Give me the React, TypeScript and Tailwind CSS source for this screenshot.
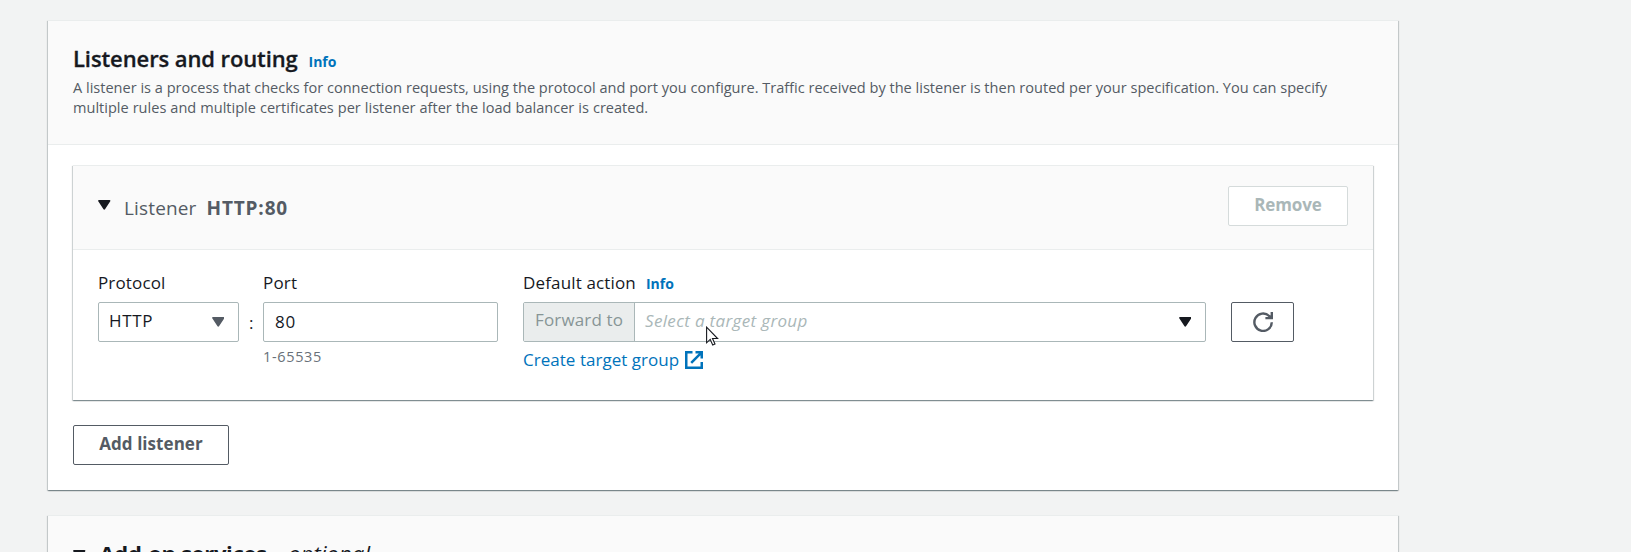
import type { ReactNode } from "react";

function Caret({ className = "" }: { className?: string }) {
  return (
    <svg width="12.5" height="10.5" viewBox="0 0 13 11" className={className} fill="currentColor">
      <path d="M1 0h11c.8 0 1.2.8.8 1.4L7.3 9.8c-.4.6-1.2.6-1.6 0L.2 1.4C-.2.8.2 0 1 0z" />
    </svg>
  );
}

function RefreshIcon() {
  return (
    <svg width="20" height="20" viewBox="0 0 20 20" fill="none" stroke="currentColor" strokeWidth="2.4">
      <path d="M18.8 10.2a8.7 8.7 0 1 1-2.6-6.2l2 2" />
      <path d="M18.8 0v6.1h-6.4" />
      <path d="M15.2 3.6h3.2v2h-2.6z" fill="currentColor" stroke="none" />
    </svg>
  );
}

function ExternalIcon() {
  return (
    <svg width="18" height="18" viewBox="0 0 18 18" fill="none" stroke="currentColor" strokeWidth="2.5">
      <path d="M7.5 1.25H1.25v15.5h15.5V11" />
      <path d="M10.5 1.25h6.25V7.5M16.4 1.6L6.2 11.8" />
    </svg>
  );
}

function Panel({ className = "", children }: { className?: string; children: ReactNode }) {
  return (
    <section
      className={`border-t border-[#eaeded] bg-white shadow-[0_1px_1px_0_rgba(0,28,36,0.3),1px_1px_1px_0_rgba(0,28,36,0.15),-1px_1px_1px_0_rgba(0,28,36,0.15)] ${className}`}
    >
      {children}
    </section>
  );
}

function Info({ className = "" }: { className?: string }) {
  return <a className={`text-[14px] font-bold text-[#0073bb] ${className}`}>Info</a>;
}

export default function App() {
  return (
    <div className="h-[552px] overflow-hidden bg-[#f2f3f3] pt-[20px] pl-[48px] font-['Open_Sans','Noto_Sans',sans-serif] text-[17px] leading-[22px] text-[#16191f]">
      <Panel className="h-[470px] w-[1350px]">
        <header className="h-[124px] border-b border-[#eaeded] bg-[#fafafa] px-[25px] pt-[22px]">
          <div className="flex h-[30px] items-baseline leading-[30px]">
            <h2 className="w-[224px] text-[22px] font-semibold tracking-[-0.1px] whitespace-nowrap [-webkit-text-stroke:0.3px_currentColor]">
              Listeners and routing
            </h2>
            <Info className="ml-[11.5px]" />
          </div>
          <p className="mt-[4px] text-[14.56px] leading-[20px] whitespace-nowrap text-[#545b64]">
            A listener is a process that checks for connection requests, using the protocol and port you configure. Traffic received by the listener is then routed per your specification. You can specify
            <br />
            <span className="[word-spacing:0.24px]">
              multiple rules and multiple certificates per listener after the load balancer is created.
            </span>
          </p>
        </header>

        <div className="px-[25px] pt-[20px]">
          <Panel className="h-[235px] w-[1300px]">
            <header className="flex h-[84px] items-start border-b border-[#eaeded] bg-[#fafafa] pr-[25px] pl-[25px]">
              <Caret className="mt-[34px]" />
              <h3 className="mt-[28px] ml-[13.5px] flex text-[19px] leading-[28px] text-[#545b64]">
                <span className="tracking-[0.15px]">Listener</span>
                <span className="ml-[10px] font-bold tracking-[0.85px]">HTTP:80</span>
              </h3>
              <button className="mt-[20px] ml-auto h-[40px] w-[120px] rounded-[2px] border border-[#d5dbdb] bg-white pb-[3px] font-bold tracking-[-0.1px] text-[#aab7b8]">
                Remove
              </button>
            </header>

            <div className="flex pt-[22px] pl-[25px]">
              <div className="w-[141px]">
                <label className="block tracking-[0.14px]">Protocol</label>
                <div className="mt-[8px] flex h-[40px] items-center justify-between rounded-[2px] border border-[#aab7b8] pr-[14px] pl-[10px]">
                  <span className="pb-[3px] tracking-[0.7px]">HTTP</span>
                  <Caret className="text-[#545b64]" />
                </div>
              </div>
              <span className="w-[24px] pt-[40px] pl-[10px]">:</span>
              <div className="w-[235px]">
                <label className="block tracking-[0.2px]">Port</label>
                <div className="mt-[8px] flex h-[40px] items-center rounded-[2px] border border-[#aab7b8] pl-[11px] tracking-[0.8px]">
                  80
                </div>
                <div className="mt-[5px] text-[14.5px] leading-[20px] tracking-[0.65px] text-[#687078]">1-65535</div>
              </div>
              <div className="ml-[25px] w-[683px]">
                <div className="flex h-[22px] items-baseline">
                  <label className="tracking-[0.15px]">Default action</label>
                  <Info className="ml-[10px]" />
                </div>
                <div className="mt-[8px] flex h-[40px] overflow-hidden rounded-[2px] border border-[#aab7b8]">
                  <span className="flex w-[111px] items-center border-r border-[#aab7b8] bg-[#eaeded] pb-[5px] pl-[11px] tracking-[0.15px] text-[#879596]">
                    Forward to
                  </span>
                  <span className="flex flex-1 items-center justify-between pr-[14px] pl-[10px] text-[#aab7b8]">
                    <span className="pb-[2px] tracking-[0.34px] italic">Select a target group</span>
                    <Caret className="text-[#16191f]" />
                  </span>
                </div>
                <a className="mt-[7px] flex items-center text-[#0073bb]">
                  <span className="tracking-[0.03px]">Create target group</span>
                  <span className="ml-[6px]">
                    <ExternalIcon />
                  </span>
                </a>
              </div>
              <button className="mt-[30px] ml-[25px] flex h-[40px] w-[63px] items-center justify-center rounded-[2px] border border-[#545b64] text-[#545b64]">
                <RefreshIcon />
              </button>
            </div>
          </Panel>
          <button className="mt-[25px] h-[40px] w-[156px] rounded-[2px] border border-[#545b64] pb-[3px] font-bold tracking-[0.05px] text-[#545b64]">
            Add listener
          </button>
        </div>
      </Panel>

      <Panel className="mt-[25px] h-[80px] w-[1350px]">
        <header className="flex h-[80px] items-start bg-[#fafafa] pt-[22px] pl-[25px] text-[22px] leading-[30px]">
          <Caret className="mt-[12px]" />
          <h2 className="ml-[14px] font-bold tracking-[-0.34px]">Add-on services</h2>
          <span className="ml-[7px] flex italic">
            <span>-&nbsp;</span>
            <span className="ml-[2px] tracking-[0.1px]">optional</span>
          </span>
        </header>
      </Panel>

      <svg width="14" height="21" viewBox="0 0 14 21" className="absolute top-[326px] left-[706px]">
        <path
          d="M.6 1.2v15.6l3.6-3.4 2.5 5.6 2.3-1-2.5-5.5h5.1z"
          fill="#fff"
          stroke="#16191f"
          strokeWidth="1.1"
          strokeLinejoin="miter"
        />
      </svg>
    </div>
  );
}
